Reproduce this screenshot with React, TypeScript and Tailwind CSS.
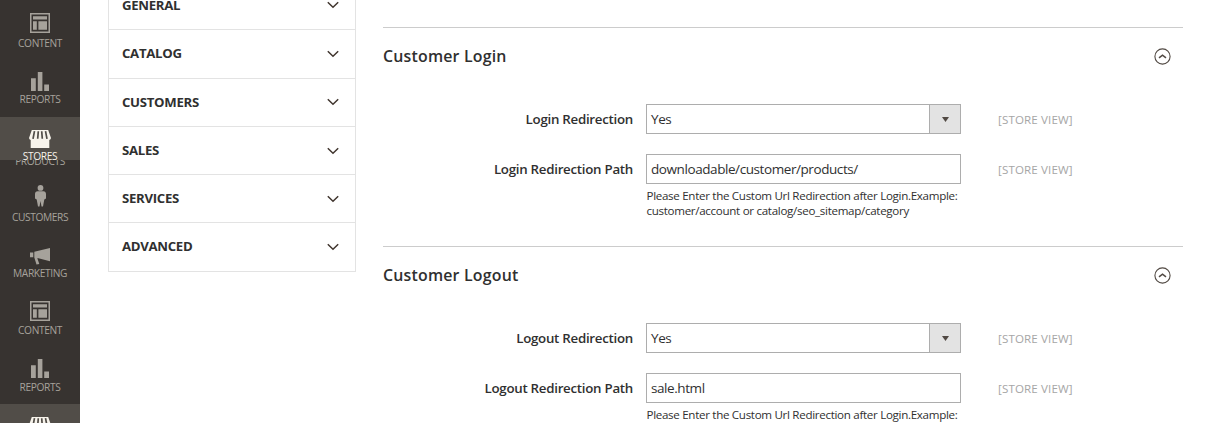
import React from "react";

const ContentIcon = () => (
  <svg width="20" height="20" viewBox="0 0 20 20" fill="currentColor">
    <path fillRule="evenodd" d="M0 0h20v20H0zM1.500 1.500v17h17v-17z" />
    <path d="M3 3.300h14v3.200H3zM3 8.300h3.800v8.400H3zM8.400 8.300H17v8.400H8.400z" />
  </svg>
);
const ReportsIcon = () => (
  <svg width="18" height="19" viewBox="0 0 18 19" fill="currentColor">
    <path d="M0 6.300h4.800V19H0zM6.800 0h4.600v19H6.800zM13.200 12.600H18V19h-4.800z" />
  </svg>
);
const StoresIcon = () => (
  <svg width="22" height="18" viewBox="0 0 22 18" fill="currentColor">
    <path d="M2.800 0h16.400L22 8a2.200 2.200 0 0 1-1.700 2v8H1.700v-8A2.200 2.200 0 0 1 0 8z" />
    <g stroke="#514d48" strokeWidth="1.700">
      <path d="M5.500 1.200 4 8.800M9.300 1.200 8.700 8.800M12.700 1.200 13.300 8.800M16.500 1.200 18 8.800" />
    </g>
  </svg>
);
const CustomerIcon = () => (
  <svg width="11" height="22" viewBox="0 0 11 22" fill="currentColor">
    <circle cx="5.500" cy="2.900" r="2.900" />
    <path d="M2.600 6.300h5.800C10 6.300 11 7.500 11 9v4.500L9.300 14.500 8 21.500H6.500L5.500 16l-1 5.500H3L1.700 14.500 0 13.500V9c0-1.500 1-2.700 2.600-2.700z" />
  </svg>
);
const MarketingIcon = () => (
  <svg width="20" height="17" viewBox="0 0 20 17" fill="currentColor">
    <path d="M20 0v13.300L9.400 10.400 7.500 10v.8L9.300 16l-2.800.5L4.300 9.400V3.800zM0 4.500h3.300v4.700H0z" />
  </svg>
);

type NavProps = { label: string; icon: React.ReactNode; box: string; text?: string; active?: boolean };
const NavItem = ({ label, icon, box, text = "", active }: NavProps) => (
  <a
    className={`flex shrink-0 flex-col items-center [&>svg]:shrink-0 ${box} ${
      active ? "bg-[#514d48] text-[#f7f3eb]" : "text-[#a6a29b]"
    }`}
  >
    {icon}
    <span className={`text-[10.200px] leading-3 tracking-[-0.380px] ${text}`}>{label}</span>
  </a>
);

const Sidebar = () => (
  <nav className="flex h-[423px] w-20 shrink-0 flex-col overflow-hidden bg-[#373330]">
    <NavItem label="CONTENT" icon={<ContentIcon />} box="h-[58px] pt-[13px]" text="mt-[4px]" />
    <NavItem label="REPORTS" icon={<ReportsIcon />} box="h-[59px] pt-[14px]" text="mt-[2px]" />
    <NavItem label="STORES" icon={<StoresIcon />} box="h-[43px] pt-[13px]" text="mt-[2px]" active />
    <div className="flex h-[13px] shrink-0 flex-col items-center overflow-hidden text-[#a6a29b]">
      <span className="-mt-[5px] text-[10.200px] leading-3 tracking-[-0.380px]">PRODUCTS</span>
    </div>
    <NavItem label="CUSTOMERS" icon={<CustomerIcon />} box="h-[59px] pt-[12px]" text="mt-[4px]" />
    <NavItem label="MARKETING" icon={<MarketingIcon />} box="h-[56px] pt-[16px]" text="mt-[2px]" />
    <NavItem label="CONTENT" icon={<ContentIcon />} box="h-[57px] pt-[13px]" text="mt-[3px]" />
    <NavItem label="REPORTS" icon={<ReportsIcon />} box="h-[59px] pt-[14px]" text="mt-[3px]" />
    <NavItem label="STORES" icon={<StoresIcon />} box="h-[59px] pt-[13px]" text="mt-[2px]" active />
  </nav>
);

const tabs = ["GENERAL", "CATALOG", "CUSTOMERS", "SALES", "SERVICES", "ADVANCED"];

const Tabs = () => (
  <div className="-mt-5 ml-[27.500px] h-[291.500px] w-[248px] shrink-0 border border-[#e3e3e3]">
    {tabs.map((t, i) => (
      <div
        key={t}
        className={`flex h-[48.300px] items-center justify-between pt-[0.500px] pr-4 pl-[13.500px] text-[13.200px] font-bold tracking-[-0.300px] ${
          i ? "border-t border-[#e3e3e3]" : ""
        }`}
      >
        <span>{t}</span>
        <svg width="12" height="8" viewBox="0 0 12 8" fill="none" stroke="#41362f" strokeWidth="1.500">
          <path d="M.8 1.200 6 6.300l5.200-5.100" />
        </svg>
      </div>
    ))}
  </div>
);

const Scope = () => (
  <span className="ml-[37px] pt-px text-[11.600px] tracking-[0.120px] text-[#a6a6a6]">[STORE VIEW]</span>
);

type SectionProps = { title: string; label: string; value: string; box: string };
const Section = ({ title, label, value, box }: SectionProps) => (
  <section className={`${box} shrink-0 border-t border-[#ccc]`}>
    <div className="flex h-[57px] items-center justify-between pr-3">
      <h2 className="pt-px text-[15.900px] font-semibold tracking-[0.200px]">{title}</h2>
      <svg width="17" height="17" viewBox="0 0 17 17" fill="none" stroke="#514943">
        <circle cx="8.500" cy="8.500" r="7.600" strokeWidth="1.100" />
        <path d="M5 9.900 8.500 7.200 12 9.900" strokeWidth="1.500" />
      </svg>
    </div>
    <div className="mt-[19px] flex h-[30px] items-center">
      <label className="w-[250px] pt-px text-right text-[13.300px] font-semibold tracking-[-0.270px]">
        {label} Redirection
      </label>
      <div className="ml-[13px] flex h-[30px] w-[315px] border border-[#adadad]">
        <span className="flex-1 pl-1 text-[13.500px] leading-7 tracking-[-0.420px]">Yes</span>
        <span className="flex w-[31px] items-center justify-center border-l border-[#adadad] bg-[#e3e3e3]">
          <svg width="7" height="5" viewBox="0 0 7 5" fill="#514943">
            <path d="M0 0h7L3.500 5z" />
          </svg>
        </span>
      </div>
      <Scope />
    </div>
    <div className="mt-5 flex h-[30px] items-center">
      <label className="w-[250px] pt-px text-right text-[13.300px] font-semibold tracking-[-0.270px]">
        {label} Redirection Path
      </label>
      <div className="ml-[13px] h-[30px] w-[315px] border border-[#adadad] pl-1 text-[13.500px] leading-7 tracking-[-0.420px]">
        {value}
      </div>
      <Scope />
    </div>
    <p className="mt-[5px] ml-[263.500px] text-[11.600px] leading-[14.500px] tracking-[-0.310px] whitespace-nowrap">
      Please Enter the Custom Url Redirection after Login.Example:
      <br />
      customer/account or catalog/seo_sitemap/category
    </p>
  </section>
);

export default function App() {
  return (
    <div className="flex h-[423px] w-[1210px] items-start overflow-hidden bg-white font-['Open_Sans',sans-serif] text-[#303030]">
      <Sidebar />
      <Tabs />
      <main className="ml-[27.500px] flex w-[800px] shrink-0 flex-col pt-[27px]">
        <Section title="Customer Login" label="Login" value="downloadable/customer/products/" box="h-[219px]" />
        <Section title="Customer Logout" label="Logout" value="sale.html" box="h-[219px]" />
      </main>
    </div>
  );
}
